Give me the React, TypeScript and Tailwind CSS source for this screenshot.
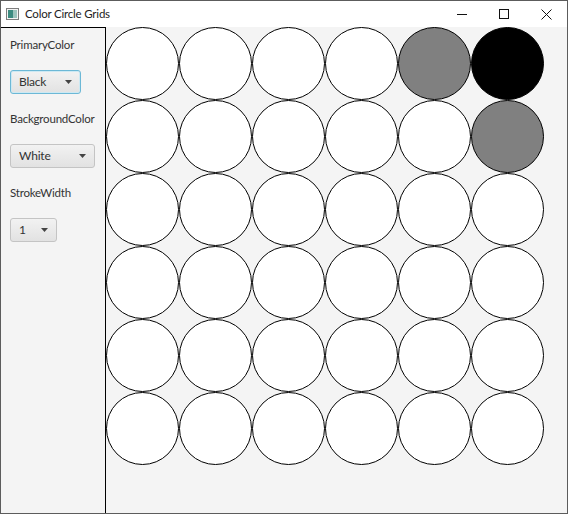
import React from 'react'

const font = { fontFamily: 'Lato, "Noto Sans", sans-serif' }

type Fill = 'white' | 'gray' | 'black'

const grid: Fill[][] = [
  ['white', 'white', 'white', 'white', 'gray', 'black'],
  ['white', 'white', 'white', 'white', 'white', 'gray'],
  ['white', 'white', 'white', 'white', 'white', 'white'],
  ['white', 'white', 'white', 'white', 'white', 'white'],
  ['white', 'white', 'white', 'white', 'white', 'white'],
  ['white', 'white', 'white', 'white', 'white', 'white'],
]

const fillClass: Record<Fill, string> = {
  white: 'bg-white',
  gray: 'bg-[#808080]',
  black: 'bg-black',
}

function ComboBox({ label, width, focused }: { label: string; width: string; focused?: boolean }) {
  return (
    <div
      className={`${width} h-[24px] flex items-center justify-between pl-[8px] pr-[8px] rounded-[3px] border bg-gradient-to-b from-[#f2f2f2] to-[#e2e2e2] text-[12px] text-[#333] ${
        focused
          ? 'border-[#6cb8d6] shadow-[inset_0_0_0_1px_#cde9f3]'
          : 'border-[#c4c4c4]'
      }`}
    >
      <span>{label}</span>
      <svg width="7" height="4" viewBox="0 0 7 4">
        <path d="M0 0 L7 0 L3.5 4 Z" fill="#444" />
      </svg>
    </div>
  )
}

function TitleBar() {
  return (
    <div className="h-[26px] bg-white flex items-center">
      <svg width="13" height="12" viewBox="0 0 13 12" className="ml-[5px] mr-[6px]">
        <rect x="0.5" y="0.5" width="12" height="11" fill="#f4f4f4" stroke="#7d7d7d" />
        <rect x="2" y="2" width="5" height="8" fill="#3c8b80" />
        <rect x="7" y="2" width="4" height="8" fill="#9cc4bd" />
      </svg>
      <span className="text-[11.5px] tracking-[-0.2px] text-[#222]">Color Circle Grids</span>
      <div className="ml-auto flex h-full">
        <div className="w-[42px] h-full flex items-center justify-center">
          <svg width="10" height="10" viewBox="0 0 10 10">
            <path d="M0 5.5 H10" stroke="#111" strokeWidth="1" />
          </svg>
        </div>
        <div className="w-[42px] h-full flex items-center justify-center">
          <svg width="10" height="10" viewBox="0 0 10 10">
            <rect x="0.5" y="0.5" width="9" height="9" fill="none" stroke="#111" strokeWidth="1" />
          </svg>
        </div>
        <div className="w-[42px] h-full flex items-center justify-center">
          <svg width="11" height="11" viewBox="0 0 11 11">
            <path d="M0.5 0.5 L10.5 10.5 M10.5 0.5 L0.5 10.5" stroke="#111" strokeWidth="1" />
          </svg>
        </div>
      </div>
    </div>
  )
}

export default function App() {
  return (
    <div
      className="w-[568px] h-[514px] border border-[#5c5c5c] bg-[#f4f4f4] flex flex-col overflow-hidden"
      style={font}
    >
      <TitleBar />
      <div className="flex flex-1">
        <aside className="w-[105px] border-t border-r border-black flex flex-col pl-[9px] pt-[9px] text-[11.5px] tracking-[-0.2px] text-[#333]">
          <span className="h-[16px] leading-[16px]">PrimaryColor</span>
          <div className="mt-[17px]">
            <ComboBox label="Black" width="w-[71px]" focused />
          </div>
          <span className="mt-[17px] h-[16px] leading-[16px]">BackgroundColor</span>
          <div className="mt-[17px]">
            <ComboBox label="White" width="w-[85px]" />
          </div>
          <span className="mt-[17px] h-[16px] leading-[16px]">StrokeWidth</span>
          <div className="mt-[17px]">
            <ComboBox label="1" width="w-[47px]" />
          </div>
        </aside>
        <main className="flex-1">
          <div className="grid grid-cols-[repeat(6,73px)]">
            {grid.flatMap((row, r) =>
              row.map((fill, c) => (
                <div
                  key={`${r}-${c}`}
                  className={`w-[73px] h-[73px] rounded-full border border-black ${fillClass[fill]}`}
                />
              )),
            )}
          </div>
        </main>
      </div>
    </div>
  )
}
